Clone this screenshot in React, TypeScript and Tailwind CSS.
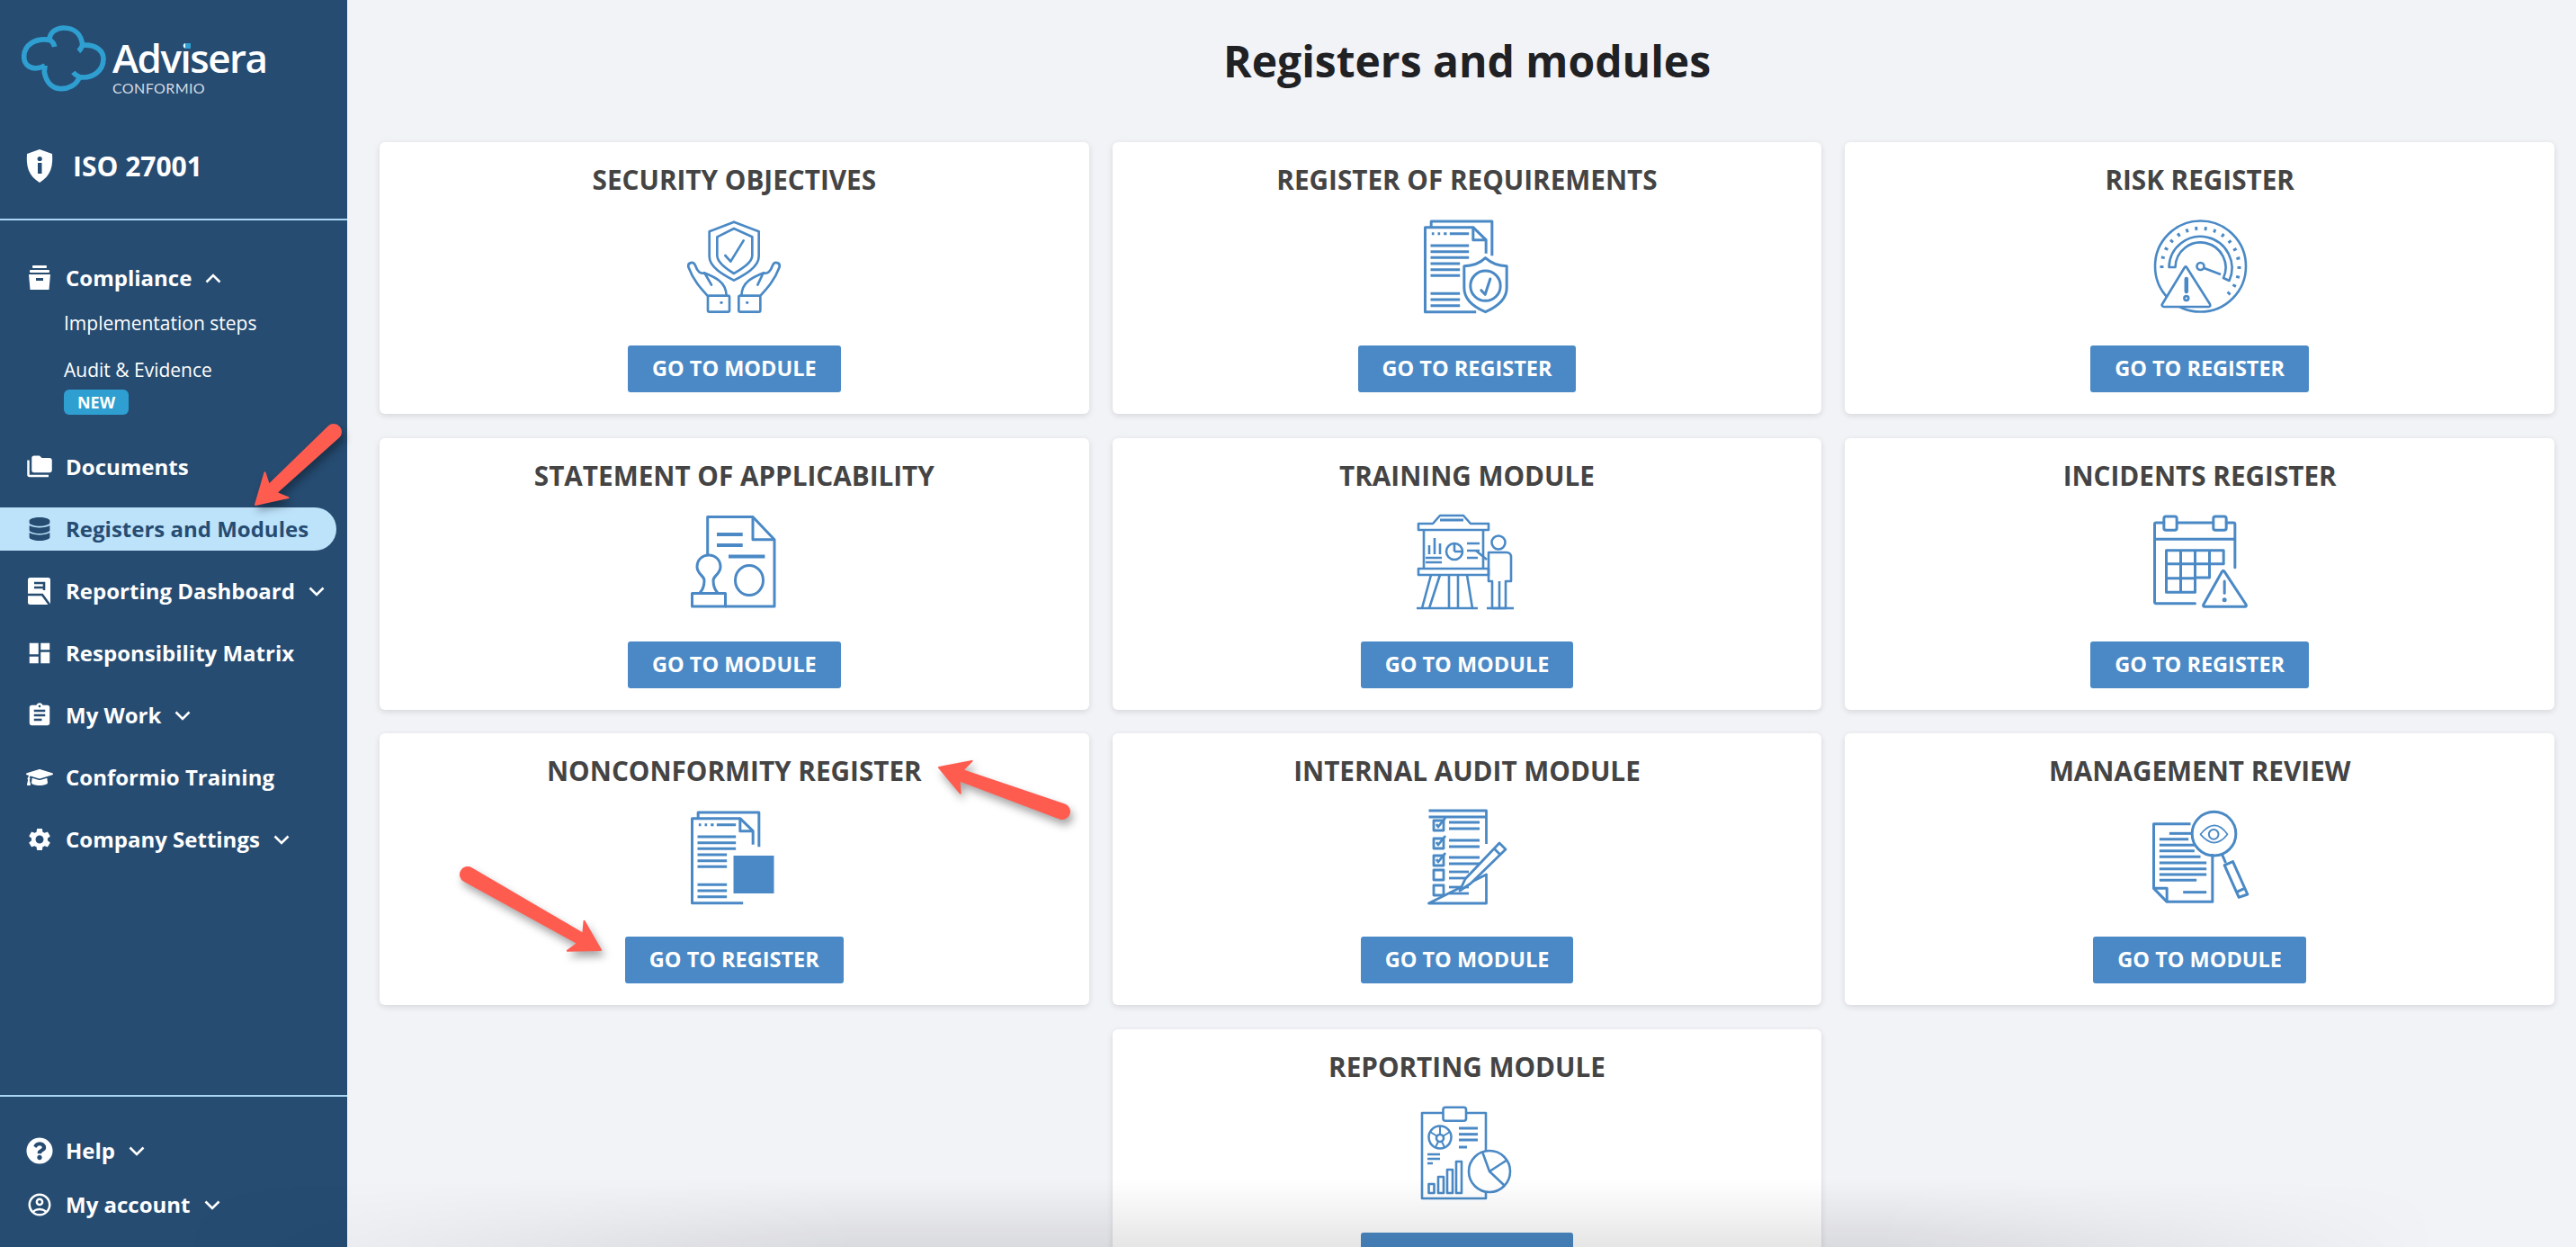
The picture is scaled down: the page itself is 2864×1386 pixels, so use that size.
import { FC, ReactNode } from "react";
import { FaDatabase, FaGraduationCap, FaQuestionCircle } from "react-icons/fa";
import { MdAssignment, MdDashboard, MdFolderCopy, MdOutlineAccountCircle, MdSettings } from "react-icons/md";

const BLUE = "#4a89c5";

const Chevron: FC<{ up?: boolean }> = ({ up }) => (
  <svg width="18" height="11" viewBox="0 0 18 11" fill="none" className="ml-[15px] shrink-0">
    <path d={up ? "M1.5 9.5L9 2l7.5 7.5" : "M1.5 1.5L9 9l7.5-7.5"} stroke="currentColor" strokeWidth="2.6" />
  </svg>
);

const Lines: FC<{ x1: number; x2: number; ys: number[]; w?: number }> = ({ x1, x2, ys, w }) => (
  <>
    {ys.map((y) => (
      <path key={y} d={`M${x1} ${y}H${x2}`} strokeWidth={w} />
    ))}
  </>
);

// all icons sit in a 120x110 box, some use the coords of the crop they were traced from
const IconBox: FC<{ view?: string; sw?: number; children: ReactNode }> = ({ view = "0 0 120 110", sw = 2.6, children }) => (
  <svg width="120" height="110" viewBox={view} fill="none" stroke={BLUE} strokeWidth={sw} strokeLinejoin="round" className="block">
    {children}
  </svg>
);

const ShieldHands = () => (
  <IconBox view="167 3 360 330" sw={8}>
    <path d="M347 20L430 52V135C430 170 385 195 347 215C309 195 265 170 265 135V52Z" />
    <path d="M347 42L408 70V132C408 155 375 175 347 192C319 175 291 155 291 132V70Z" />
    <path d="M318 132L336 152L379 82" strokeLinecap="round" />
    <path d="M258 265C235 240 212 215 195 170C192 155 212 150 218 165C225 185 235 195 248 190C285 205 320 220 322 265M250 192L272 230" strokeLinecap="round" />
    <path d="M436 265C459 240 482 215 499 170C502 155 482 150 476 165C469 185 459 195 446 190C409 205 374 220 372 265M444 192L426 230" strokeLinecap="round" />
    <rect x="260" y="266" width="72" height="54" rx="5" />
    <rect x="363" y="266" width="72" height="54" rx="5" />
    <circle cx="305" cy="289" r="5" fill={BLUE} stroke="none" />
    <circle cx="391" cy="289" r="5" fill={BLUE} stroke="none" />
  </IconBox>
);

const DocBack = () => (
  <>
    <path d="M275 66V48H478V163" />
    <path d="M425 350H255V68H415L458 110V155" />
    <path d="M415 68V110H458" />
    <path d="M277 89H285M297 89H305M317 89H327M337 89H401" />
    <Lines x1={273} x2={401} ys={[129, 149, 169]} />
    <Lines x1={273} x2={371} ys={[189, 209, 229, 289, 309, 329]} />
  </>
);

const DocShield = () => (
  <IconBox view="214.5 33 360 330" sw={9}>
    <DocBack />
    <path d="M456 170C478 190 505 197 527 197V270C527 310 490 335 456 350C420 335 385 310 385 270V197C410 197 435 190 456 170Z" />
    <circle cx="456" cy="263" r="50" />
    <path d="M442 278L455 292L472 240" strokeLinecap="round" />
  </IconBox>
);

const Gauge = () => (
  <IconBox>
    <circle cx="60.5" cy="55" r="50.5" />
    <path d="M17.5 57A43 43 0 1 1 90 87" strokeWidth="4" strokeDasharray="3 7.4" />
    <path d="M25.5 56A35 35 0 1 1 92.5 71L86 68A28 28 0 1 0 32.5 56Z" />
    <circle cx="60.5" cy="55" r="4" />
    <path d="M64.5 57L83 64" />
    <path d="M45 56L71 97C72 99 71 100 69 100H20C18 100 17 98 18 97L43 56C44 55 44.5 55 45 56Z" fill="white" />
    <path d="M44.8 69V83" strokeWidth="4.5" strokeLinecap="round" />
    <circle cx="44.8" cy="90.5" r="2.4" />
  </IconBox>
);

const Stamp = () => (
  <IconBox sw={3}>
    <path d="M30.7 47V4.5H81L105 29.8V104H50" />
    <path d="M81 4.5V29.8H105" />
    <path d="M41 24H69.7M41 36H69.7" strokeWidth="4" />
    <path d="M54 48.5H94.4" strokeWidth="4" />
    <ellipse cx="77" cy="75" rx="15.5" ry="16.5" />
    <path d="M22 89C26 85 27 80 27 75C27 70 19 68 19 60C19 52 25 47 32 47C39 47 45 52 45 60C45 68 37 70 37 75C37 80 38 85 42 89" />
    <rect x="13.5" y="89.5" width="37" height="14.5" />
  </IconBox>
);

const Training = () => (
  <IconBox sw={2.6}>
    <path d="M6 19V12H22L30 3H56L64 12H84V19ZM12 19V62M78 19V62M6 62V69H84V62ZM6 62H84" />
    <path d="M30 8H56" strokeWidth="3" />
    <path d="M14 50H32M18 46V36M24 46V28M30 46V34M14 55H32" />
    <circle cx="46" cy="43" r="9" />
    <path d="M46 43V34M46 43H55M60 34H74M60 42H74M60 50H72" />
    <path d="M20 69L10 106M30 69L18 106M40 69V106M50 69V106M60 69L66 106M4 106H72" />
    <circle cx="95" cy="33" r="7.5" />
    <path d="M82 52L70 42M84 44H104C107 44 109 46 109 49V76H103V106H88V76H84V44ZM96 76V106" />
    <path d="M82 106H112" />
  </IconBox>
);

const CalendarWarn = () => (
  <IconBox view="256.5 30 360 330" sw={9}>
    <path d="M420 332H290C287 332 285 330 285 328V68C285 65 287 63 290 63H316M360 63H478M524 63H548C551 63 553 65 553 68V212" strokeLinecap="round" />
    <rect x="316" y="42" width="43" height="46" rx="7" />
    <rect x="481" y="42" width="43" height="46" rx="7" />
    <path d="M285 118H553" />
    <path d="M324 155H515V200H468V246H420V295H324ZM372 155V295M420 155V246M468 155V200M324 200H468M324 248H420" />
    <path d="M518 226L590 336C592 340 590 343 586 343H452C448 343 446 340 448 336L510 226C513 222 515 222 518 226Z" />
    <path d="M518 258V298" strokeLinecap="round" />
    <circle cx="518" cy="320" r="3" fill={BLUE} />
  </IconBox>
);

const DocSquare = () => (
  <IconBox view="214.5 33 360 330" sw={9}>
    <DocBack />
    <rect x="393" y="192" width="135" height="126" fill={BLUE} stroke="none" />
  </IconBox>
);

const Audit = () => (
  <IconBox sw={2.8}>
    <path d="M17.5 3H81.5V40M81.5 74V106H17.5ZM17.5 10H81.5" />
    {[14, 34, 53, 69, 86].map((y) => (
      <rect key={y} x="23" y={y} width="11" height="11" />
    ))}
    <path d="M26 18L28 21L36 11M26 38L28 41L36 31M26 57L28 60L36 50" />
    <Lines x1={40} x2={74} ys={[16, 23, 36, 43, 55, 62]} />
    <Lines x1={40} x2={62} ys={[71, 78, 88, 95]} />
    <path d="M96 39L103 46L64 84L52 92L58 79ZM90 45L97 52" fill="white" />
  </IconBox>
);

const Review = () => (
  <IconBox view="436.5 57 360 330" sw={9}>
    <path d="M585 110H462V325L506 370H658V210" />
    <path d="M462 325H506V370" />
    <path d="M514 142H590" />
    <Lines x1={481} x2={578} ys={[161]} />
    <Lines x1={481} x2={598} ys={[181, 200]} />
    <Lines x1={481} x2={618} ys={[220]} />
    <Lines x1={481} x2={638} ys={[240, 260, 279]} />
    <Lines x1={481} x2={605} ys={[298]} />
    <path d="M560 338H638" />
    <circle cx="663" cy="143" r="73" />
    <path d="M618 145C650 105 680 105 708 145C680 182 650 182 618 145Z" strokeWidth="5" />
    <circle cx="662" cy="145" r="16" strokeWidth="6" />
    <path d="M690 212L702 240" />
    <path d="M698 248L726 236L775 345L746 355Z" />
    <path d="M738 338L765 325" />
  </IconBox>
);

const Reporting = () => (
  <IconBox sw={2.6}>
    <path d="M33 10H10V105H81V94M81 55V10H59" />
    <rect x="33.5" y="3.7" width="25.5" height="15" rx="2.5" />
    <circle cx="30" cy="37" r="12.5" />
    <circle cx="30" cy="38" r="4" />
    <path d="M30 24V33M19 31L27 36M41 31L33 36M25 48L28 42M35 48L32 42" strokeWidth="2" />
    <Lines x1={51} x2={72} ys={[27, 33.7, 40]} w={3} />
    <path d="M51 48H60" strokeWidth="3" />
    <path d="M16 56H30M16 61H30M16 66H22" strokeWidth="2.6" />
    <rect x="17.5" y="89" width="6" height="10" />
    <rect x="28" y="81" width="6" height="18" />
    <rect x="38" y="73" width="6" height="26" />
    <rect x="48" y="64" width="6" height="35" />
    <circle cx="85" cy="75" r="23" fill="white" />
    <path d="M77 53L85 75L105 62M85 75L102 91" />
  </IconBox>
);

const cards: { title: string; action: string; icon: ReactNode }[] = [
  { title: "SECURITY OBJECTIVES", action: "GO TO MODULE", icon: <ShieldHands /> },
  { title: "REGISTER OF REQUIREMENTS", action: "GO TO REGISTER", icon: <DocShield /> },
  { title: "RISK REGISTER", action: "GO TO REGISTER", icon: <Gauge /> },
  { title: "STATEMENT OF APPLICABILITY", action: "GO TO MODULE", icon: <Stamp /> },
  { title: "TRAINING MODULE", action: "GO TO MODULE", icon: <Training /> },
  { title: "INCIDENTS REGISTER", action: "GO TO REGISTER", icon: <CalendarWarn /> },
  { title: "NONCONFORMITY REGISTER", action: "GO TO REGISTER", icon: <DocSquare /> },
  { title: "INTERNAL AUDIT MODULE", action: "GO TO MODULE", icon: <Audit /> },
  { title: "MANAGEMENT REVIEW", action: "GO TO MODULE", icon: <Review /> },
];

const Card: FC<{ title: string; action?: string; icon: ReactNode }> = ({ title, action, icon }) => (
  <div className="flex h-[302px] flex-col items-center rounded-md bg-white pt-[22px] shadow-[0_2px_7px_rgba(0,0,0,0.12)]">
    <h2 className="h-[40px] text-[29.7px] leading-[40px] font-bold text-[#444444]">{title}</h2>
    <div className="mt-[21px]">{icon}</div>
    <button className="mt-[33px] h-[52px] rounded-[3px] bg-[#4a89c5] px-[27px] text-[23.5px] font-bold text-white">
      {action}
    </button>
  </div>
);

const NavRow: FC<{ icon: ReactNode; label: string; chevron?: boolean; active?: boolean; up?: boolean }> = ({
  icon,
  label,
  chevron,
  active,
  up,
}) => (
  <div
    className={`flex h-12 w-[374px] items-center rounded-r-full pl-[29px] text-[24px] font-bold ${
      active ? "bg-[#bde3fb] text-[#264c72]" : "text-white"
    }`}
  >
    <div className="flex w-[30px] shrink-0 items-center justify-center">{icon}</div>
    <span className="ml-[14px]">{label}</span>
    {chevron && <Chevron up={up} />}
  </div>
);

const Arrow: FC<{ tail: [number, number]; tip: [number, number] }> = ({ tail, tip }) => {
  const dx = tip[0] - tail[0];
  const dy = tip[1] - tail[1];
  const len = Math.hypot(dx, dy);
  const ux = dx / len;
  const uy = dy / len;
  const px = -uy;
  const py = ux;
  const at = (along: number, side: number) =>
    `${tip[0] - ux * along + px * side} ${tip[1] - uy * along + py * side}`;
  return (
    <path
      d={`M${at(0, 0)} L${at(32, 19)} L${at(26, 6)} L${at(len, 8)} A8 8 0 0 1 ${at(len, -8)} L${at(26, -6)} L${at(32, -19)} Z`}
      fill="#ff5c50"
      stroke="#ff5c50"
      strokeWidth="2"
      strokeLinejoin="round"
    />
  );
};

export default function App() {
  return (
    <div className="relative flex h-[1386px] w-[2864px] overflow-hidden bg-[#f2f3f7] font-['Open_Sans',sans-serif]">
      <aside className="flex w-[386px] shrink-0 flex-col bg-[#264c72] text-white">
        <div className="h-[243px] shrink-0 border-b-2 border-[#a9d6f2] box-content">
          <div className="flex pt-[27px] pl-[20px]">
            <svg width="100" height="75" viewBox="60 80 300 225" fill="none" stroke="#2e9fd0" strokeWidth="17">
              <path d="M150 218C105 240 78 215 80 185C82 150 115 125 165 132C175 137 180 145 182 155M165 132C165 105 190 92 212 92C250 92 272 115 275 150C272 158 268 165 262 170M275 150C320 145 345 170 345 195C345 235 310 262 265 256C258 252 250 248 244 240M265 256C255 285 225 295 205 295C175 295 155 275 148 240C148 230 150 222 150 218" />
            </svg>
            <div className="relative ml-[5px] flex flex-col">
              <span className="mt-[11px] h-[52px] text-[44px] leading-[52px] font-semibold tracking-[-1.5px]">Advisera</span>
              <span className="absolute top-[21px] left-[81px] size-[6px] bg-[#2e9fd0]" />
              <span className="text-[16px] leading-[16px] tracking-[0.4px] text-[#d5dbe2] font-['Lato',sans-serif]">CONFORMIO</span>
            </div>
          </div>
          <div className="mt-[56px] flex items-center pl-[29px]">
            <svg width="30" height="37" viewBox="0 0 30 37">
              <path d="M15 0L29 5C30 18 28 29 15 37C2 29 0 18 1 5Z" fill="white" />
              <rect x="13" y="15" width="4.5" height="12" fill="#264c72" />
              <circle cx="15.2" cy="10.5" r="2.6" fill="#264c72" />
            </svg>
            <span className="ml-[22px] text-[30px] font-bold">ISO 27001</span>
          </div>
        </div>

        <nav className="flex flex-1 flex-col pt-[40px]">
          <NavRow
            label="Compliance"
            chevron
            up
            icon={
              <svg width="26" height="28" viewBox="0 0 26 28" fill="white">
                <rect x="5" y="0" width="16" height="3" rx="1" />
                <rect x="2" y="5" width="22" height="3" rx="1" />
                <path d="M1 10H25L23.5 27H2.5Z" />
                <rect x="9" y="14" width="8" height="3" fill="#264c72" />
              </svg>
            }
          />
          <div className="pl-[71px] text-[21px] text-white">
            <div className="mt-px flex h-[52px] items-center">Implementation steps</div>
            <div className="flex h-[52px] items-center">Audit &amp; Evidence</div>
            <div className="-mt-[5px] flex h-[28px] w-[72px] items-center justify-center rounded-md bg-[#2e9fd0] text-[18px] font-bold">
              NEW
            </div>
          </div>
          <div className="mt-[34px] flex flex-col gap-[21px]">
            <NavRow label="Documents" icon={<MdFolderCopy size={40} />} />
            <NavRow label="Registers and Modules" active icon={<FaDatabase size={26} />} />
            <NavRow
              label="Reporting Dashboard"
              chevron
              icon={
                <svg width="26" height="30" viewBox="0 0 26 30">
                  <rect width="25" height="30" rx="2.5" fill="white" />
                  <path d="M7 6H18V14M7 11H18" stroke="#264c72" strokeWidth="2.6" fill="none" />
                  <path d="M0 19H16L24 30" stroke="#264c72" strokeWidth="2.6" fill="none" />
                </svg>
              }
            />
            <NavRow label="Responsibility Matrix" icon={<MdDashboard size={36} />} />
            <NavRow label="My Work" chevron icon={<MdAssignment size={36} />} />
            <NavRow label="Conformio Training" icon={<FaGraduationCap size={30} />} />
            <NavRow label="Company Settings" chevron icon={<MdSettings size={36} />} />
          </div>
        </nav>

        <div className="flex flex-col gap-3 border-t-2 border-[#a9d6f2] pt-[36px] pb-[23px]">
          <NavRow label="Help" chevron icon={<FaQuestionCircle size={30} />} />
          <NavRow label="My account" chevron icon={<MdOutlineAccountCircle size={36} />} />
        </div>
      </aside>

      <main className="flex-1 pr-[24px] pl-[36px]">
        <h1 className="mt-[38px] mb-[60px] h-[60px] text-center text-[48px] leading-[60px] font-bold text-[#1f2124]">
          Registers and modules
        </h1>
        <div className="grid grid-cols-3 gap-x-[26px] gap-y-[26.5px]">
          {cards.map((c) => (
            <Card key={c.title} {...c} />
          ))}
          <div className="col-start-2">
            <Card title="REPORTING MODULE" action="GO TO MODULE" icon={<Reporting />} />
          </div>
        </div>
      </main>

      {/* red annotation arrows drawn on top of the screenshot */}
      <svg
        width="2864"
        height="1386"
        className="pointer-events-none absolute top-0 left-0 drop-shadow-[3px_6px_5px_rgba(0,0,0,0.35)]"
      >
        <Arrow tail={[371, 480]} tip={[284, 561]} />
        <Arrow tail={[1181, 902]} tip={[1044, 853]} />
        <Arrow tail={[520, 972]} tip={[668, 1056]} />
      </svg>

      {/* soft shadow at the bottom edge */}
      <div className="pointer-events-none absolute right-[150px] bottom-0 left-[200px] h-[75px] bg-gradient-to-t from-black/10 to-transparent [mask-image:linear-gradient(to_right,transparent,black_30%,black_75%,transparent)]" />
    </div>
  );
}
